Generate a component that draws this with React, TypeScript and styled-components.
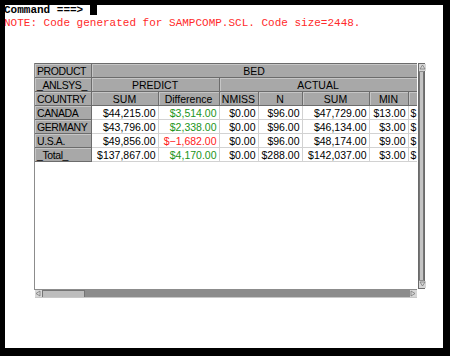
import React from 'react';
import styled, { createGlobalStyle } from 'styled-components';

const GlobalStyle = createGlobalStyle`
  html, body {
    margin: 0;
    padding: 0;
    background: #000000;
  }
`;

type Tone = 'plain' | 'gain' | 'loss';

interface Row {
  label: string;
  cells: { value: string; tone?: Tone }[];
}

const rows: Row[] = [
  {
    label: 'CANADA',
    cells: [
      { value: '$44,215.00' },
      { value: '$3,514.00', tone: 'gain' },
      { value: '$0.00' },
      { value: '$96.00' },
      { value: '$47,729.00' },
      { value: '$13.00' },
    ],
  },
  {
    label: 'GERMANY',
    cells: [
      { value: '$43,796.00' },
      { value: '$2,338.00', tone: 'gain' },
      { value: '$0.00' },
      { value: '$96.00' },
      { value: '$46,134.00' },
      { value: '$3.00' },
    ],
  },
  {
    label: 'U.S.A.',
    cells: [
      { value: '$49,856.00' },
      { value: '$\u22121,682.00', tone: 'loss' },
      { value: '$0.00' },
      { value: '$96.00' },
      { value: '$48,174.00' },
      { value: '$9.00' },
    ],
  },
  {
    label: '_Total_',
    cells: [
      { value: '$137,867.00' },
      { value: '$4,170.00', tone: 'gain' },
      { value: '$0.00' },
      { value: '$288.00' },
      { value: '$142,037.00' },
      { value: '$3.00' },
    ],
  },
];

const colWidths = [56, 67, 61, 39, 44, 67, 39, 9];

function Arrow({ dir }: { dir: 'up' | 'down' | 'left' | 'right' }) {
  const points = {
    up: '1,5 3.5,1 6,5',
    down: '1,1 3.5,5 6,1',
    left: '5,1 1,3.5 5,6',
    right: '1,1 5,3.5 1,6',
  }[dir];
  return (
    <svg width="7" height="7" viewBox="0 0 7 7">
      <polygon points={points} fill="none" stroke="#7a7a7a" strokeWidth="0.8" />
    </svg>
  );
}

export default function App() {
  return (
    <Screen>
      <GlobalStyle />
      <Panel>
        <CommandLine>
          Command ===&gt; <Cursor />
        </CommandLine>
        <NoteLine>NOTE: Code generated for SAMPCOMP.SCL. Code size=2448.</NoteLine>

        <Window>
          <Content>
            <Grid>
              <colgroup>
                {colWidths.map((w, i) => (
                  <col key={i} style={{ width: w }} />
                ))}
              </colgroup>
              <tbody>
                <tr>
                  <LabelHead>PRODUCT</LabelHead>
                  <Head colSpan={7}>BED</Head>
                </tr>
                <tr>
                  <LabelHead>_ANLSYS_</LabelHead>
                  <Head colSpan={2}>PREDICT</Head>
                  <Head colSpan={5}>ACTUAL</Head>
                </tr>
                <tr>
                  <LabelHead>COUNTRY</LabelHead>
                  <Head>SUM</Head>
                  <Head>Difference</Head>
                  <Head>NMISS</Head>
                  <Head>N</Head>
                  <Head>SUM</Head>
                  <Head>MIN</Head>
                  <Head />
                </tr>
                {rows.map((r) => (
                  <tr key={r.label}>
                    <LabelHead>{r.label}</LabelHead>
                    {r.cells.map((c, i) => (
                      <Cell key={i} tone={c.tone ?? 'plain'}>
                        {c.value}
                      </Cell>
                    ))}
                    <ClippedCell>$</ClippedCell>
                  </tr>
                ))}
              </tbody>
            </Grid>
          </Content>

          <VScroll>
            <ArrowBox>
              <Arrow dir="up" />
            </ArrowBox>
            <VThumb />
            <ArrowBox>
              <Arrow dir="down" />
            </ArrowBox>
          </VScroll>

          <HScroll>
            <ArrowBox>
              <Arrow dir="left" />
            </ArrowBox>
            <HThumb />
            <Track />
            <ArrowBox>
              <Arrow dir="right" />
            </ArrowBox>
          </HScroll>
          <Corner />
        </Window>
      </Panel>
    </Screen>
  );
}

const Screen = styled.div`
  width: 450px;
  height: 356px;
  box-sizing: border-box;
  padding: 5px 7px 8px 5px;
  background: #000000;
  overflow: hidden;
`;

const Panel = styled.div`
  width: 100%;
  height: 100%;
  background: #ffffff;
  overflow: hidden;
  font-family: "Liberation Mono", "Courier New", monospace;
  font-size: 11px;
`;

const CommandLine = styled.div`
  height: 12px;
  line-height: 10px;
  color: #000000;
  font-weight: bold;
  white-space: pre;
  margin-left: -1px;
`;

const Cursor = styled.span`
  display: inline-block;
  width: 7px;
  height: 11px;
  margin-top: -1px;
  vertical-align: top;
  background: #000000;
`;

const NoteLine = styled.div`
  height: 12px;
  line-height: 12px;
  color: #ff2a2a;
  white-space: pre;
  margin-left: -1px;
`;

const Window = styled.div`
  display: grid;
  grid-template-columns: 383px 8px;
  grid-template-rows: 227px 8px;
  margin: 34px 0 0 29px;
  width: 391px;
`;

const Content = styled.div`
  border-left: 1px solid #8c8c8c;
  border-bottom: 1px solid #8c8c8c;
  background: #ffffff;
  overflow: hidden;
`;

const Grid = styled.table`
  border-collapse: collapse;
  table-layout: fixed;
  width: 382px;
  font-family: "Liberation Sans", Arial, sans-serif;
  font-size: 10.5px;

  tr {
    height: 14px;
  }
  td:first-child,
  th:first-child {
    border-left: none;
  }
`;

const Head = styled.th`
  padding: 0;
  height: 13px;
  line-height: 12px;
  font-weight: normal;
  text-align: center;
  color: #000000;
  background: #a8a8a8;
  border: 1px solid #6c6c6c;
  box-shadow: inset 1px 1px 0 #c6c6c6;
  white-space: nowrap;
  overflow: hidden;
`;

const LabelHead = styled(Head)`
  text-align: left;
  padding-left: 2px;
  letter-spacing: -0.4px;
`;

const toneColor: Record<Tone, string> = {
  plain: '#000000',
  gain: '#1a941a',
  loss: '#ff2020',
};

const Cell = styled.td<{ tone: Tone }>`
  padding: 0 2px 0 0;
  height: 13px;
  line-height: 12px;
  text-align: right;
  white-space: nowrap;
  overflow: hidden;
  color: ${(p) => toneColor[p.tone]};
  background: #ffffff;
  border: 1px solid #d2d2d2;
`;

const ClippedCell = styled(Cell).attrs({ tone: 'plain' as Tone })`
  text-align: left;
  padding: 0 0 0 2px;
  border-right: none;
`;

const VScroll = styled.div`
  display: flex;
  flex-direction: column;
  box-sizing: border-box;
  margin-left: 1px;
  height: 226px;
  background: #8e8e8e;
  border: 1px solid #6a6a6a;
`;

const ArrowBox = styled.div`
  display: flex;
  align-items: center;
  justify-content: center;
  flex: 0 0 7px;
  width: 7px;
  height: 7px;
  background: #d6d6d6;
  overflow: hidden;
`;

const VThumb = styled.div`
  flex: 1;
  margin: 1px 0;
  background: #c4c4c4;
  border: 1px solid #767676;
  border-width: 0 1px;
`;

const HScroll = styled.div`
  display: flex;
  box-sizing: border-box;
  margin-left: 1px;
  height: 8px;
  background: #8c8c8c;
  border-bottom: 1px solid #c8c8c8;
`;

const HThumb = styled.div`
  width: 41px;
  background: #bdbdbd;
  border: 1px solid #747474;
  border-width: 1px 1px 0 1px;
`;

const Track = styled.div`
  flex: 1;
`;

const Corner = styled.div`
  background: #ffffff;
`;
